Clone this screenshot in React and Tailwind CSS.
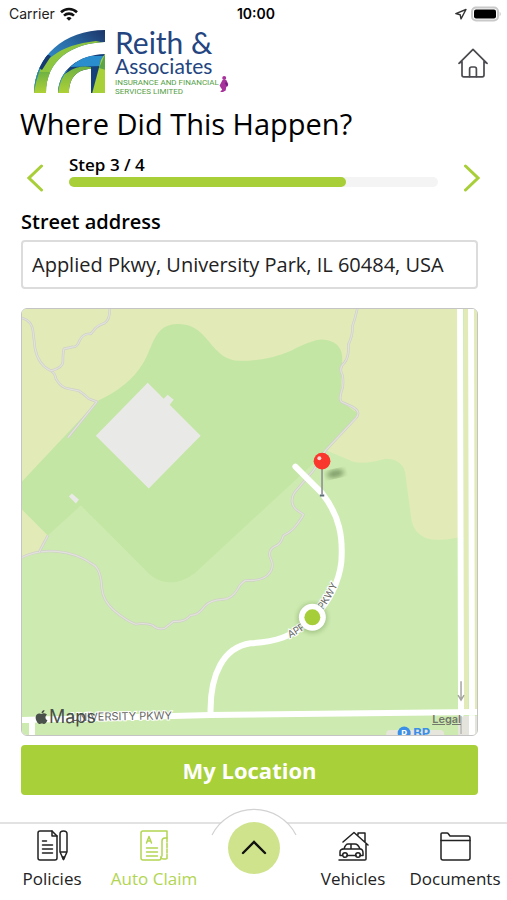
import React, { useState } from "react";
import { FaApple } from "react-icons/fa";

const StatusBar = () => (
  <div className="grid grid-cols-3 items-center h-7 pl-[9px] pr-1 font-['Inter',sans-serif] text-sm text-[#222]">
    <div className="flex items-center gap-1">
      <span>Carrier</span>
      <svg className="w-5 h-4" viewBox="0 0 20 16" fill="none" stroke="#111" strokeWidth="2.6">
        <path d="M2 6.2a11.6 11.6 0 0 1 16 0" />
        <path d="M5 9.6a7.4 7.4 0 0 1 10 0" />
        <path d="M7.4 12.2a3.8 3.8 0 0 1 5.2 0L10 14.8z" fill="#111" stroke="none" />
      </svg>
    </div>
    <span className="text-center font-semibold text-black">10:00</span>
    <div className="flex items-center justify-end gap-1">
      <svg className="w-3 h-3" viewBox="0 0 12 12" fill="none" stroke="#333" strokeWidth="1.4" strokeLinejoin="round">
        <path d="M11 1.5.8 5.6l4.4 1.2.8 4z" />
      </svg>
      <svg className="w-8 h-4" viewBox="0 0 32 16">
        <rect x="1" y="1.5" width="26" height="13" rx="4" fill="#fff" stroke="#c9c9c9" strokeWidth="2" />
        <rect x="3" y="3.5" width="22" height="9" rx="2" fill="#000" />
        <path d="M28.6 5.5q2.4 2.5 0 5z" fill="#c9c9c9" />
      </svg>
    </div>
  </div>
);

const Logo = () => (
  <div className="flex items-start">
    <svg className="w-[71px] h-[63px] mt-0.5" viewBox="0 0 71 63">
      <defs>
        <linearGradient id="blueArc" x1="0" y1="1" x2="1" y2="0">
          <stop offset="0" stopColor="#163a72" />
          <stop offset=".4" stopColor="#2f86c4" />
          <stop offset=".65" stopColor="#2a6ca6" />
          <stop offset="1" stopColor="#1b3468" />
        </linearGradient>
        <linearGradient id="greenArc" x1="0" y1="1" x2="0" y2="0">
          <stop offset="0" stopColor="#aed136" />
          <stop offset="1" stopColor="#6fb243" />
        </linearGradient>
        <clipPath id="outerArc">
          <path d="M71 0v12C38 13 12 30 12 63H0C1 26 30 0 71 0z" />
        </clipPath>
        <clipPath id="innerArc">
          <path d="M71 24v39H57V39C43 39 35 48 35 63H24C25 40 44 25 71 24z" />
        </clipPath>
      </defs>
      <g clipPath="url(#outerArc)">
        <path d="M0 0h71v63H0z" fill="url(#blueArc)" />
        <path d="M0 63V46L13 30 20 25Q34 14 62 11L71 13 20 63z" fill="#8fc63f" />
        <path d="M0 63V42l17 0 3 21z" fill="url(#greenArc)" />
        <path d="M0 63Q3 40 14 26L9 26Q0 40 0 63z" fill="#1f83c4" />
        <path d="M5 38 12 24l5 2-9 14z" fill="#173a70" />
      </g>
      <g clipPath="url(#innerArc)">
        <path d="M20 20h51v43H20z" fill="#16407a" />
        <path d="M36 37 50 26h21l-4 10z" fill="#2a8dcd" />
        <path d="M20 63V50l14-8q10-7 23-5v5L38 63z" fill="url(#greenArc)" />
        <path d="M24 63Q26 48 34 40L28 42 22 58z" fill="#2a8dcd" />
        <path d="M72 22 67 30 58 64h14z" fill="#a8d038" />
        <path d="M72 22v18l-7-2z" fill="#5ba547" />
      </g>
    </svg>
    <div className="ml-[10px] flex flex-col font-['Lato',sans-serif] text-[#24457f] whitespace-nowrap">
      <span className="text-[30px] leading-7">Reith &amp;</span>
      <span className="text-[21px] leading-5">Associates</span>
      <span className="mt-0.5 font-['Roboto',sans-serif] text-[8px] leading-[9px] text-[#55a045]">
        INSURANCE AND FINANCIAL
        <br />
        SERVICES LIMITED
      </span>
    </div>
    <svg className="w-[10px] h-4 mt-12" viewBox="0 0 10 16" fill="#a8329c">
      <circle cx="5.2" cy="2" r="2" />
      <path d="M3.5 4h3.8l2 4-1 2.5-1 .2-.6 3.8L4 16H1.2l2-2.6L2 12 .6 9.5z" />
      <path d="M7 5.5 9 9l-1 1.4-2-2.8z" fill="#6d2080" />
    </svg>
  </div>
);

const HomeIcon = () => (
  <svg className="w-[30px] h-[30px]" viewBox="0 0 30 30" fill="none" stroke="#4a4a4f" strokeWidth="1.7" strokeLinejoin="round" strokeLinecap="round">
    <path d="M4 13.5 1 15.4 15 1.4l14 14-3-1.9V27q0 1.8-1.8 1.8H5.8Q4 28.8 4 27z" />
    <path d="M11.6 28.6V21q0-2 2-2h2.8q2 0 2 2v7.6" />
  </svg>
);

const Chevron = ({ d }) => (
  <svg className="w-4 h-7" viewBox="0 0 16 28" fill="none" stroke="#a8cf38" strokeWidth="3" strokeLinecap="round">
    <path d={d} />
  </svg>
);

const trails = [
  "M21 317Q31 320 32 330L34 347Q37 364 50 370Q54 372 55 378Q60 387 68 388L78 390Q83 393 88 398L96 401L67 437",
  "M109 308Q109 319 104 322Q98 324 95 327L90 333Q83 332 79 339Q76 347 72 346L63 348Q62 352 62 361Q62 367 50 370",
  "M357 308Q355 317 352 326Q353 333 348 344Q349 356 344 362Q338 367 342 374Q344 384 341 391Q338 401 343 402L352 406Q361 411 356 417L325 450L313 470L294 492Q288 503 297 510L303 514Q302 517 295 526Q290 532 283 535Q280 545 274 546Q266 551 271 560Q274 568 267 575Q260 581 245 580Q240 583 237 589Q231 599 222 599Q209 600 204 606Q198 615 190 615Q184 622 173 621Q168 625 164 628Q157 630 152 625Q144 622 135 624Q126 621 113 610Q102 600 101 588Q100 568 92 564Q77 553 56 551Q38 549 21 557",
  "M47 535L38 552",
];

const MapPicture = () => (
  <svg className="block w-full h-full" viewBox="21 308 456 427" preserveAspectRatio="xMidYMid slice" fill="none">
    <defs>
      <path id="appliedLabel" d="M289 638Q306 630 315 619Q331 601 342 574" />
      <filter id="blur">
        <feGaussianBlur stdDeviation="2.5" />
      </filter>
    </defs>
    <path d="M21 308h456v427H21z" fill="#cdebb0" />
    <path d="M21 308h437v229Q438 541 427 538Q413 533 411 517L405 472Q402 458 385 458Q365 464 353 461L327 450L200 420L21 482z" fill="#e2ebb7" />
    <path d="M21 509 47 535 38 552 21 558zM464 308h4v405h-4zM474 308h3v405h-3z" fill="#e2ebb7" />
    <path
      d="M21 481L97 400Q128 386 142 363C153 345 153 323 177 323C209 322 209 360 240 360Q267 360 290 350C308 341 318 337 326 339Q342 342 342 358L340 400L358 413L327 450L194 573Q171 590 150 575L80 505L47 535L21 509z"
      fill="#c4e6a4"
    />
    <path d="M95 435 147 382 163 398 167 394 173 399 169 404 200 435 148 488zM68 496l3-3 7 6-3 4z" fill="#e9e9e7" />
    {trails.map((d) => (
      <g key={d} strokeLinejoin="round">
        <path d={d} stroke="#cfd0c7" strokeWidth="2.6" />
        <path d={d} stroke="#e3e1dd" strokeWidth="1.2" />
      </g>
    ))}
    <path d="M458 716h19v19h-19z" fill="#e5e4dc" />
    <g stroke="#fff" strokeWidth="6" strokeLinecap="round">
      <path d="M295 466L322 493C339 515 343 536 341 562C339 579 330 602 312 618C294 637 272 642 250 643C223 647 209 674 210 714" />
      <path d="M18 720L210 715L480 712M31 720v20M460 300L461 714M471 300L472 740" />
    </g>
    <path d="M461 716v18" stroke="#b9b9b5" strokeWidth="1.5" />
    <path d="M461 681v19M458 695l3 5 3-5" stroke="#a5a5a0" strokeWidth="1.5" />
    <g className="font-['Inter',sans-serif]" fill="#66665f" stroke="#fff" strokeWidth="2" paintOrder="stroke" fontSize="10">
      <text>
        <textPath href="#appliedLabel">APPLIED PKWY</textPath>
      </text>
      <text x="70" y="721" transform="rotate(-1 70 721)" fontSize="11">
        UNIVERSITY PKWY
      </text>
    </g>
    <rect x="386" y="730" width="58" height="8" rx="4" fill="#e6e6dc" />
    <circle cx="404" cy="733" r="6.5" fill="#3b8fe8" />
    <text x="404" y="737" textAnchor="middle" className="font-['Inter',sans-serif] font-bold" fontSize="9" fill="#fff">
      P
    </text>
    <text x="413" y="738" className="font-['Inter',sans-serif] font-bold" fontSize="13" fill="#3b8fe8">
      BP
    </text>
    <circle cx="312" cy="618" r="15" fill="#5a7a3a" opacity=".35" filter="url(#blur)" />
    <circle cx="312" cy="617" r="13.5" fill="#fff" />
    <circle cx="312" cy="617" r="8" fill="#a6ce39" />
    <ellipse cx="335" cy="473" rx="9" ry="4" fill="#4d6b3a" opacity=".6" filter="url(#blur)" transform="rotate(-12 335 473)" />
    <path d="M321.7 466v28" stroke="#8b8f92" strokeWidth="1.6" />
    <path d="M319.5 495h4.4" stroke="#5d6d78" strokeWidth="2" />
    <circle cx="321.7" cy="460.5" r="8.4" fill="#fa372d" />
    <circle cx="319" cy="457.5" r="2" fill="#fff" opacity=".8" />
  </svg>
);

const icons = {
  Policies: (
    <>
      <path d="M1 3q0-2 2-2h12l5 5v22q0 2-2 2H3q-2 0-2-2z" />
      <path d="M15 1v5h5M5.500 11h4M5.500 15h10M5.500 19h10M5.500 23h10" />
      <path d="M23 22V4q0-3 3.500-3T30 4v18l-3.500 7.500zM23 22h7" />
      <path d="M25.400 27h2.200l-1.100 2.500z" fill="currentColor" />
    </>
  ),
  "Auto Claim": (
    <>
      <path d="M22 27.500V28q0 2-2 2H4q-2 0-2-2V3q0-2 2-2h24v7h-2q-3 0-3 3v15" />
      <path d="M28 8v21h-3.500q-2.500 0-2.500-2.500" strokeDasharray="4 1.500" />
      <path d="M7.500 13 10 6.500 12.500 13M8.300 11h3.400M7.500 18h11M7.500 22h11M7.500 26h11" />
    </>
  ),
  Vehicles: (
    <>
      <path d="M5 12 16 2.500 30 15M20 5V3h7v9M28 14v15q0 1-1 1H1" />
      <path d="M2 25.500V22q0-3 4-3 1.500-5 4-5h7q3 0 5 5 3 0 3 4v2.500h-3M2 25.500h2M9 25.500h9M4 19h19M13 14v5" />
      <circle cx="7" cy="25" r="2.3" />
      <circle cx="20" cy="25" r="2.3" />
    </>
  ),
  Documents: (
    <>
      <path d="M1 28V4q0-1 1-1h5q1 0 1.500 1L10 6h18q2 0 2 2v20q0 2-2 2H3q-2 0-2-2z" />
      <path d="M1 10.500h29" />
    </>
  ),
};

const NavItem = ({ name, active }) => (
  <a href="#" className={`flex flex-col items-center pt-1.5 ${active ? "text-[#b2d552]" : "text-[#222]"}`}>
    <svg className="w-[31px] h-[31px]" viewBox="0 0 31 31" fill="none" stroke="currentColor" strokeWidth="1.5" strokeLinecap="round" strokeLinejoin="round">
      {icons[name]}
    </svg>
    <span className="mt-1.5 text-[17px] leading-6 whitespace-nowrap">{name}</span>
  </a>
);

const App = () => {
  const [address, setAddress] = useState("Applied Pkwy, University Park, IL 60484, USA");
  const step = 3;
  const steps = 4;

  return (
    <div className="min-h-screen flex flex-col bg-white text-black font-['Open_Sans',sans-serif]">
      <StatusBar />
      <header className="flex items-start justify-between pl-[34px] pr-[19px]">
        <Logo />
        <a href="#" aria-label="Home" className="mt-5">
          <HomeIcon />
        </a>
      </header>

      <h1 className="mt-2 pl-5 text-[29px] leading-10">Where Did This Happen?</h1>

      <div className="mt-1 px-[27px] flex items-center justify-between">
        <button aria-label="Previous step" className="mt-4">
          <Chevron d="M14.500 2 2 14l12.500 12" />
        </button>
        <div className="flex-1 mx-[26px]">
          <p className="text-[17px] leading-6 font-semibold">
            Step {step} / {steps}
          </p>
          <div className="h-[10px] rounded-full bg-[#f4f4f5]">
            <div className="h-full rounded-full bg-[#a8cf38]" style={{ width: `${(step / steps) * 100}%` }} />
          </div>
        </div>
        <button aria-label="Next step" className="mt-4">
          <Chevron d="M1.500 2 14 14 1.500 26" />
        </button>
      </div>

      <main className="mt-4 pl-[21px] pr-[29px] flex flex-col">
        <label htmlFor="street" className="text-xl leading-7 font-semibold">
          Street address
        </label>
        <input
          id="street"
          className="mt-1 h-[49px] w-full rounded-sm border-2 border-[#dcdcdc] px-[9px] text-xl text-[#222] outline-none"
          value={address}
          onChange={(e) => setAddress(e.target.value)}
        />
        <div className="relative mt-[19px] aspect-[457/428] overflow-hidden rounded-md border border-[#c4c4c4]">
          <MapPicture />
          <div className="absolute left-3 bottom-2 flex items-center font-['Inter',sans-serif] text-lg leading-5 text-[#4a504a]">
            <FaApple className="w-[15px] h-4" />
            Maps
          </div>
          <a href="#" className="absolute right-4 bottom-2 font-['Inter',sans-serif] text-[11px] leading-4 font-semibold underline text-[#73776c]">
            Legal
          </a>
        </div>
        <button className="mt-[9px] h-[50px] rounded bg-[#a8d038] text-[22px] font-bold text-white">My Location</button>
      </main>

      <nav className="mt-auto h-[78px] grid grid-cols-[104fr_100fr_99fr_100fr_104fr] border-t-2 border-[#e2e2e2] relative">
        <NavItem name="Policies" />
        <NavItem name="Auto Claim" active />
        <div className="flex justify-center">
          <svg className="absolute -top-4 w-[86px] h-7" viewBox="0 0 86 28" fill="#fff" stroke="#d2d2d2" strokeWidth="1.2">
            <path d="M1 27a47.300 47.300 0 0 1 84 0" />
          </svg>
          <button aria-label="Open menu" className="relative -mt-0.5 flex items-center justify-center w-[52px] h-[52px] rounded-full bg-[#cee38c]">
            <svg className="w-[26px] h-4" viewBox="0 0 26 16" fill="none" stroke="#111" strokeWidth="2.4" strokeLinecap="round">
              <path d="M2 13 13 2 24 13" />
            </svg>
          </button>
        </div>
        <NavItem name="Vehicles" />
        <NavItem name="Documents" />
      </nav>
    </div>
  );
};

export default App;
